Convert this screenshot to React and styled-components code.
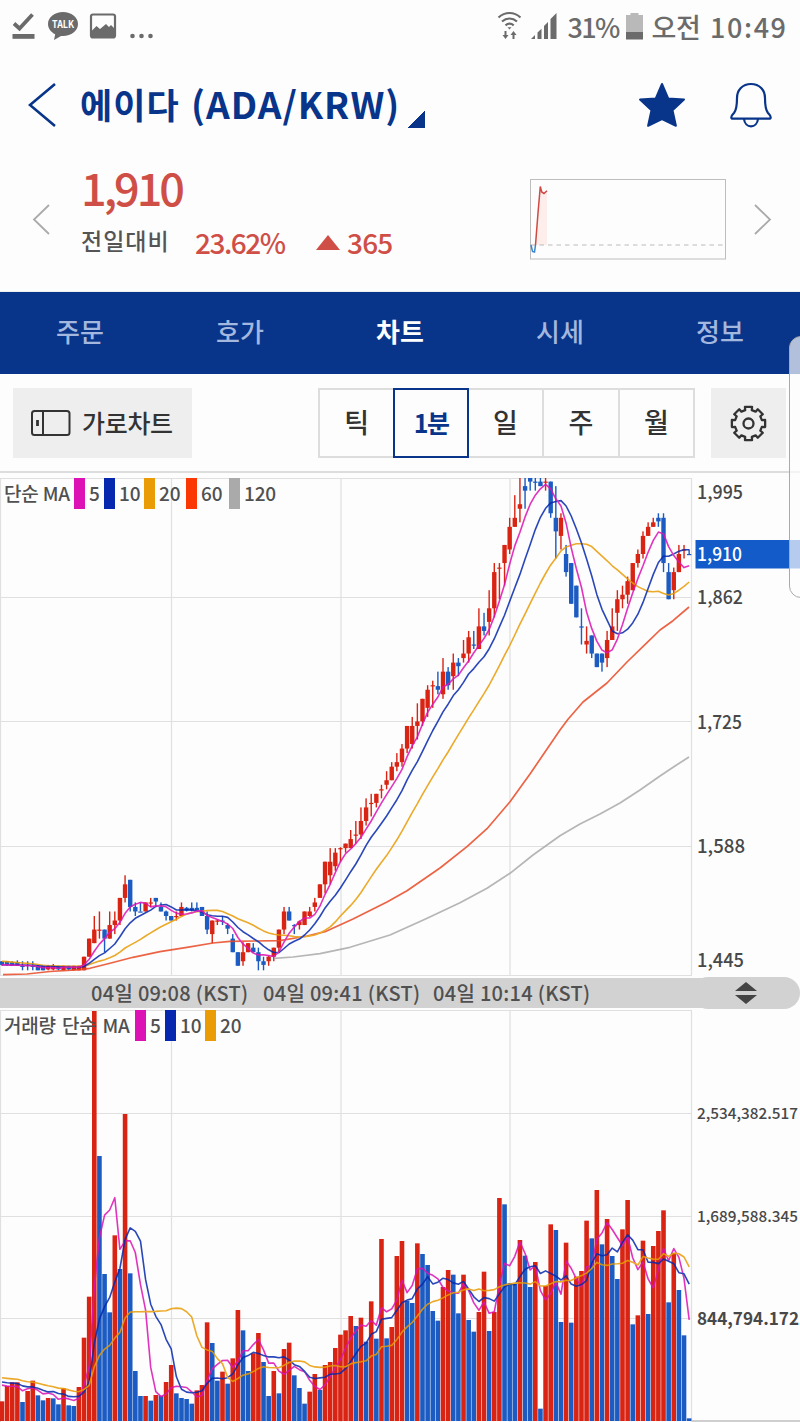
import { Fragment } from 'react'
import styled, { createGlobalStyle } from 'styled-components'

const GlobalStyle = createGlobalStyle`
  * {
    box-sizing: border-box;
  }

  body {
    margin: 0;
    background: #fdfdfd;
    font-family: 'Noto Sans CJK KR', 'Noto Sans', sans-serif;
  }
`

const colours = {
  navy: '#08358a',
  up: '#d92313',
  down: '#1b5bc2',
  ma5: '#dd12b4',
  ma10: '#0628ae',
  ma20: '#e99c05',
  ma60: '#fb3704',
  ma120: '#aaaaaa',
}

const STEP = 5.128
const FIRST_X = 2

const candleX = (i) => FIRST_X + STEP * i
const priceY = (price) => 76 + (1910 - price) * 0.905

// [rising, high, body top, body bottom, low]
const candles = [
  [0, 1460, 1460, 1456, 1455], [0, 1460, 1460, 1456, 1455],
  [0, 1460, 1459, 1455, 1455], [0, 1461, 1459, 1455, 1455],
  [0, 1460, 1455, 1455, 1450], [0, 1460, 1456, 1455, 1450],
  [0, 1460, 1455, 1455, 1450], [0, 1456, 1455, 1450, 1450],
  [0, 1455, 1455, 1450, 1450], [1, 1456, 1455, 1451, 1450],
  [1, 1457, 1455, 1451, 1450], [0, 1455, 1455, 1451, 1450],
  [1, 1455, 1455, 1450, 1450], [0, 1455, 1455, 1451, 1450],
  [1, 1455, 1455, 1450, 1450], [1, 1455, 1455, 1450, 1450],
  [1, 1465, 1465, 1450, 1450], [1, 1485, 1485, 1465, 1465],
  [1, 1510, 1495, 1480, 1480], [1, 1515, 1495, 1495, 1485],
  [0, 1495, 1495, 1485, 1470], [1, 1515, 1500, 1485, 1485],
  [1, 1515, 1505, 1500, 1490], [1, 1530, 1530, 1505, 1500],
  [1, 1555, 1545, 1530, 1525], [0, 1550, 1550, 1520, 1515],
  [0, 1525, 1520, 1515, 1510], [0, 1525, 1515, 1515, 1515],
  [1, 1525, 1525, 1515, 1515], [1, 1530, 1525, 1525, 1520],
  [0, 1530, 1530, 1526, 1520], [0, 1525, 1520, 1515, 1515],
  [0, 1516, 1515, 1510, 1505], [0, 1510, 1510, 1505, 1505],
  [1, 1515, 1510, 1510, 1505], [1, 1525, 1520, 1510, 1510],
  [0, 1520, 1519, 1516, 1515], [0, 1525, 1519, 1516, 1515],
  [0, 1525, 1519, 1516, 1515], [0, 1520, 1520, 1510, 1510],
  [0, 1515, 1510, 1495, 1490], [1, 1505, 1505, 1490, 1480],
  [1, 1506, 1505, 1505, 1500], [0, 1510, 1505, 1505, 1500],
  [0, 1502, 1500, 1496, 1490], [0, 1490, 1485, 1470, 1470],
  [0, 1470, 1470, 1455, 1455], [1, 1481, 1470, 1460, 1455],
  [1, 1480, 1480, 1470, 1470], [0, 1480, 1475, 1470, 1470],
  [0, 1475, 1470, 1460, 1450], [0, 1465, 1460, 1456, 1450],
  [1, 1466, 1465, 1460, 1455], [1, 1475, 1475, 1465, 1460],
  [1, 1495, 1495, 1475, 1470], [1, 1520, 1515, 1495, 1490],
  [0, 1520, 1515, 1505, 1505], [0, 1501, 1500, 1500, 1490],
  [1, 1505, 1504, 1500, 1495], [1, 1515, 1515, 1500, 1500],
  [1, 1520, 1515, 1510, 1509], [1, 1530, 1525, 1520, 1515],
  [1, 1545, 1545, 1530, 1530], [1, 1570, 1570, 1545, 1535],
  [1, 1585, 1570, 1555, 1545], [1, 1585, 1580, 1565, 1560],
  [1, 1586, 1585, 1585, 1570], [1, 1590, 1590, 1585, 1580],
  [1, 1605, 1595, 1585, 1585], [1, 1615, 1600, 1600, 1590],
  [1, 1630, 1615, 1600, 1595], [1, 1640, 1630, 1615, 1610],
  [1, 1645, 1635, 1635, 1620], [1, 1645, 1645, 1635, 1630],
  [1, 1655, 1650, 1650, 1640], [1, 1670, 1660, 1655, 1650],
  [1, 1680, 1675, 1660, 1660], [1, 1690, 1680, 1675, 1670],
  [1, 1700, 1695, 1680, 1675], [1, 1720, 1720, 1695, 1690],
  [1, 1730, 1720, 1700, 1695], [1, 1745, 1725, 1720, 1705],
  [1, 1750, 1750, 1725, 1720], [1, 1765, 1760, 1740, 1730],
  [1, 1770, 1765, 1765, 1740], [0, 1780, 1764, 1760, 1755],
  [1, 1795, 1780, 1755, 1750], [0, 1785, 1780, 1765, 1760],
  [1, 1800, 1790, 1775, 1760], [0, 1795, 1790, 1786, 1775],
  [1, 1815, 1800, 1795, 1790], [1, 1825, 1818, 1800, 1790],
  [0, 1825, 1810, 1810, 1805], [1, 1850, 1830, 1805, 1805],
  [0, 1845, 1830, 1825, 1820], [1, 1870, 1850, 1835, 1820],
  [1, 1900, 1890, 1850, 1840], [1, 1900, 1895, 1895, 1860],
  [1, 1920, 1920, 1900, 1875], [1, 1950, 1940, 1915, 1910],
  [1, 1975, 1950, 1940, 1940], [1, 2000, 1965, 1960, 1945],
  [0, 2000, 1985, 1980, 1960], [0, 2000, 1996, 1990, 1980],
  [0, 2000, 1990, 1990, 1980], [0, 1996, 1990, 1985, 1985],
  [1, 1996, 1990, 1990, 1980], [0, 1990, 1990, 1955, 1950],
  [0, 1985, 1950, 1935, 1905], [1, 1955, 1950, 1930, 1915],
  [0, 1920, 1910, 1890, 1885], [0, 1900, 1900, 1855, 1855],
  [0, 1875, 1875, 1840, 1840], [0, 1850, 1830, 1830, 1810],
  [1, 1830, 1814, 1810, 1800], [0, 1820, 1820, 1800, 1795],
  [0, 1800, 1800, 1785, 1785], [0, 1800, 1800, 1790, 1780],
  [1, 1825, 1815, 1795, 1785], [1, 1850, 1830, 1815, 1815],
  [1, 1870, 1860, 1845, 1825], [1, 1875, 1865, 1860, 1850],
  [1, 1885, 1880, 1865, 1855], [1, 1900, 1900, 1870, 1870],
  [1, 1915, 1910, 1900, 1895], [1, 1935, 1930, 1910, 1905],
  [1, 1945, 1940, 1930, 1930], [1, 1950, 1945, 1940, 1940],
  [0, 1955, 1950, 1946, 1940], [0, 1955, 1950, 1900, 1890],
  [0, 1900, 1890, 1860, 1860], [1, 1895, 1890, 1870, 1860],
  [1, 1920, 1910, 1890, 1890], [1, 1920, 1915, 1915, 1905],
  [0, 1915, 1910, 1910, 1910],
]

const volumes = [
  59, 105, 116, 116, 57, 90, 121, 77, 62, 69, 68, 50, 98, 47, 45, 102, 250,
  373, 1230, 795, 441, 326, 557, 456, 921, 443, 150, 75, 75, 61, 78, 76, 117,
  168, 83, 69, 66, 52, 92, 108, 296, 234, 121, 148, 112, 188, 333, 272, 150,
  203, 264, 177, 75, 150, 83, 216, 235, 137, 99, 52, 88, 141, 93, 168, 177,
  219, 259, 272, 315, 285, 310, 238, 359, 247, 546, 248, 282, 495, 540, 361,
  354, 533, 501, 468, 330, 301, 402, 453, 439, 323, 439, 303, 268, 327, 448,
  270, 327, 669, 650, 413, 411, 543, 496, 402, 477, 37, 405, 590, 573, 297,
  535, 295, 433, 450, 601, 548, 693, 530, 606, 495, 426, 575, 663, 290, 317,
  541, 321, 525, 570, 632, 356, 503, 393, 257, 8,
]

const fill = (n, value) => Array(n).fill(value)
const closes = candles.map(([rising, , top, bottom]) => (rising ? top : bottom))
const priceHistory = [...fill(10, 1465), ...fill(10, 1456), ...closes]
const volumeHistory = [...fill(10, 144), ...fill(5, 128), ...fill(5, 120), ...volumes]

const average = (values, span, toY) =>
  values
    .slice(20)
    .map((_, i) => {
      const slice = values.slice(i + 21 - span, i + 21)
      const mean = slice.reduce((a, b) => a + b, 0) / span
      return `${candleX(i).toFixed(1)},${toY(mean).toFixed(1)}`
    })
    .join(' ')

const volumeY = (v) => 411 - v / 3

const ma60 =
  '3,496.7 27,496 50,493.5 80,491.7 90,490.3 110,485.3 133,479.3 160,473.7 187,469.3 213,465 230,463.3 255,463 280,462.7 307,458 325,453.7 353,441 387,424 407,412.7 440,390 467,368.7 487,350.7 510,323.7 530,296 560,252 568,241.3 583,224 607,205 627,184 647,164.7 660,152 673,142.7 689,129'
const ma120 =
  '274,480.3 293,479 320,475.7 350,469.3 390,457 425,441.3 460,424.7 487,410.3 510,395.3 533,377 560,357.7 580,346 600,336 620,325 640,312 660,298 675,288 689,279'

const tabs = [
  { label: '주문' },
  { label: '호가' },
  { label: '차트', active: true },
  { label: '시세' },
  { label: '정보' },
]

const periods = ['틱', '1분', '일', '주', '월']

const priceTicks = [
  { y: 14, label: '1,995', width: 46 },
  { y: 119, label: '1,862', width: 46 },
  { y: 243.5, label: '1,725', width: 45 },
  { y: 368, label: '1,588', width: 48 },
  { y: 482, label: '1,445', width: 47 },
]

const volumeTicks = [
  { y: 103, label: '2,534,382.517', width: 101, size: 15.3 },
  { y: 206, label: '1,689,588.345', width: 101, size: 15.3 },
  { y: 308.5, label: '844,794.172', width: 102, size: 17.5, bold: true },
]

const verticals = [171.5, 341, 510]

function TickLabel({ tick }) {
  const size = tick.size || 19
  return (
    <text
      x="697"
      y={tick.y + size * 0.37}
      fontSize={size}
      fontWeight={tick.bold ? 700 : 500}
      textLength={tick.width}
      lengthAdjust="spacingAndGlyphs"
      fill="#484848"
    >
      {tick.label}
    </text>
  )
}

function Grid({ height, lines }) {
  return (
    <g stroke="#e0e0e0" strokeWidth="1.2">
      <path d={`M0 .5H692M.5 0V${height}M691.5 0V${height}`} />
      {verticals.map((x) => (
        <path key={x} d={`M${x} 0V${height}`} />
      ))}
      {lines.map((y) => (
        <path key={y} d={`M0 ${y}H692`} />
      ))}
    </g>
  )
}

function PriceChart() {
  return (
    <Chart width="800" height="499" viewBox="0 0 800 499">
      <Grid height={497} lines={[119.5, 243.5, 368.5, 497.5]} />
      {candles.map(([rising, high, top, bottom, low], i) => {
        const x = candleX(i)
        const bodyY = priceY(top)
        const height = Math.max(priceY(bottom) - bodyY, 1.2)
        return (
          <g key={i} fill={rising ? colours.up : colours.down}>
            <rect x={x - 0.7} y={priceY(high)} width="1.4" height={priceY(low) - priceY(high)} />
            <rect x={x - 2.2} y={bodyY} width="4.4" height={height} />
          </g>
        )
      })}
      <g fill="none" strokeWidth="1.6" strokeLinejoin="round" opacity="0.85">
        <polyline points={ma120} stroke={colours.ma120} strokeWidth="1.7" />
        <polyline points={ma60} stroke="#ea4a25" strokeWidth="1.7" />
        <polyline points={average(priceHistory, 20, priceY)} stroke={colours.ma20} />
        <polyline points={average(priceHistory, 10, priceY)} stroke={colours.ma10} />
        <polyline points={average(priceHistory, 5, priceY)} stroke={colours.ma5} />
      </g>
      {priceTicks.map((tick) => (
        <TickLabel key={tick.label} tick={tick} />
      ))}
      <rect x="695.5" y="62" width="104.5" height="28.5" fill="#125bc9" />
      <text x="697" y="83" fontSize="19" fontWeight="500" textLength="45" lengthAdjust="spacingAndGlyphs" fill="#fff">
        1,910
      </text>
    </Chart>
  )
}

function VolumeChart() {
  return (
    <Chart width="800" height="412" viewBox="0 0 800 412">
      <Grid height={412} lines={[103.5, 206.5, 308.5]} />
      <path d="M692 411H800" stroke="#cfcfcf" strokeWidth="2" />
      {volumes.map((v, i) => (
        <rect
          key={i}
          x={candleX(i) - 2.3}
          y={volumeY(v)}
          width="4.6"
          height={v / 3}
          fill={i === 0 || v >= volumes[i - 1] ? colours.up : colours.down}
        />
      ))}
      <g fill="none" strokeWidth="1.6" strokeLinejoin="round" opacity="0.85">
        <polyline points={average(volumeHistory, 5, volumeY)} stroke={colours.ma5} />
        <polyline points={average(volumeHistory, 10, volumeY)} stroke={colours.ma10} />
        <polyline points={average(volumeHistory, 20, volumeY)} stroke={colours.ma20} />
      </g>
      {volumeTicks.map((tick) => (
        <TickLabel key={tick.label} tick={tick} />
      ))}
    </Chart>
  )
}

function StatusIcons() {
  return (
    <svg width="160" height="52" viewBox="0 0 160 52" fill="#6b6b6b">
      <path d="M14 23.5l5.500 5L32.500 14.500" fill="none" stroke="#6b6b6b" strokeWidth="3.800" />
      <rect x="12.500" y="34" width="22" height="4.800" />
      <path d="M63 12c8.300 0 15 5.400 15 12s-6.700 12-15 12l-2-.1-7 4 1.200-5.600C50.800 32 48 28.400 48 24c0-6.600 6.700-12 15-12z" />
      <text x="52" y="28.300" fontSize="10.500" fontWeight="700" textLength="22" lengthAdjust="spacingAndGlyphs" fill="#fff">
        TALK
      </text>
      <rect x="91" y="14.500" width="24" height="23" rx="2" fill="none" stroke="#6b6b6b" strokeWidth="2.200" />
      <path d="M91 31.500l5.500-5.500 3.500 3 6-5 3 3 2-2 4 4v9H91z" />
      <circle cx="132.500" cy="36" r="2.300" />
      <circle cx="141.500" cy="36" r="2.300" />
      <circle cx="150.500" cy="36" r="2.300" />
    </svg>
  )
}

function SignalIcons() {
  return (
    <svg width="62" height="52" viewBox="496 0 62 52" fill="#6b6b6b">
      <g fill="none" stroke="#6b6b6b" strokeWidth="2.200">
        <path d="M497.500 17.500c6.500-6 15.500-6 22 0" />
        <path d="M501 21.500c4.500-4 10.500-4 15 0" />
        <path d="M504.500 25.300c2.600-2.200 5.600-2.200 8.200 0" />
      </g>
      <path d="M506.500 27.200h4l-2 2.300z" />
      <path d="M503.500 31h2v4h2l-3 4-3-4h2zM511.500 39h2v-4h2l-3-4-3 4h2z" />
      <path d="M530 39l4-4v4zM536.500 39v-6.500l4-3.800V39zM543 39V26l4-4v17zM549.500 39V19l6-6v26z" />
    </svg>
  )
}

function BatteryIcon() {
  return (
    <svg width="17" height="27" viewBox="0 0 17 27">
      <path d="M4.500 0h8v2H17v17H0V2h4.500z" fill="#b9b9b9" />
      <rect y="19" width="17" height="7.500" fill="#6b6b6b" />
    </svg>
  )
}

function Chevron({ width, height, colour, stroke, flip }) {
  return (
    <svg width={width} height={height} viewBox={`0 0 ${width} ${height}`}>
      <path
        d={
          flip
            ? `M1 1L${width - 2} ${height / 2}L1 ${height - 1}`
            : `M${width - 1} 1L2 ${height / 2}L${width - 1} ${height - 1}`
        }
        fill="none"
        stroke={colour}
        strokeWidth={stroke}
      />
    </svg>
  )
}

function StarIcon() {
  return (
    <svg width="48" height="46" viewBox="0 0 48 46">
      <path
        d="M24 2l6.200 14.400 15.800 1.200-11.500 10.600 3.400 15.600L24 37.200l-13.900 6.600 3.400-15.600L2 17.600l15.800-1.200z"
        fill={colours.navy}
        stroke={colours.navy}
        strokeWidth="2"
        strokeLinejoin="round"
      />
    </svg>
  )
}

function BellIcon() {
  return (
    <svg width="42" height="46" viewBox="0 0 42 46" fill="none" stroke={colours.navy} strokeWidth="2.200">
      <path
        d="M21 2C12.500 2 7 8 7 16c0 9-.6 12-3 15-1.300 1.500-2.700 2.700-2.700 4.200 0 1 .7 1.500 1.700 1.500h36c1 0 1.700-.5 1.700-1.500 0-1.500-1.400-2.700-2.700-4.200-2.400-3-3-6-3-15 0-8-5.500-14-14-14z"
        strokeLinejoin="round"
      />
      <path d="M14 37c.5 4.500 3.400 7.300 7 7.300s6.500-2.800 7-7.300" />
    </svg>
  )
}

function Sparkline() {
  return (
    <svg width="196" height="81" viewBox="0 0 196 81" fill="none">
      <rect x=".5" y=".5" width="195" height="79.500" stroke="#bdbdbd" />
      <path d="M5 66L10 8l3 5 4-1v54z" fill="#fdeeec" />
      <path d="M1 66H195" stroke="#bbb" strokeDasharray="4.500 4" />
      <path d="M1 66l1.500 6.500 2 .5 1-7" stroke="#3a87cf" strokeWidth="1.500" />
      <path d="M5.500 66L8 34 10.300 7.500l1.400 5.500 2.300 1.500 3-2.700" stroke="#cf4a43" strokeWidth="1.500" />
    </svg>
  )
}

function LandscapeIcon() {
  return (
    <svg width="40" height="26" viewBox="0 0 40 26" fill="none" stroke="#333" strokeWidth="2">
      <rect x="1" y="1" width="37.500" height="24" rx="2.500" />
      <path d="M12 1v24" />
      <path d="M6.500 10v6" strokeWidth="2.800" />
    </svg>
  )
}

function GearIcon() {
  const teeth = [0, 45, 90, 135, 180, 225, 270, 315]
  const point = (r, angle) => {
    const a = (angle * Math.PI) / 180
    return `${(18.5 + r * Math.sin(a)).toFixed(2)} ${(18.5 - r * Math.cos(a)).toFixed(2)}`
  }
  const outline = teeth
    .map((t) => [point(13.8, t - 14), point(17, t - 12), point(17, t + 12), point(13.8, t + 14)].join('L'))
    .join('L')
  return (
    <svg width="37" height="37" viewBox="0 0 37 37" fill="none" stroke="#333" strokeWidth="2.300">
      <path d={`M${outline}Z`} strokeLinejoin="round" />
      <circle cx="18.500" cy="18.500" r="5" />
    </svg>
  )
}

function MaLegend({ title, entries }) {
  return (
    <Legend>
      {title}
      {entries.map(([span, colour, width]) => (
        <Fragment key={span}>
          <Swatch $colour={colour} />
          <Span $width={width}>{span}</Span>
        </Fragment>
      ))}
    </Legend>
  )
}

export default function App() {
  return (
    <Screen>
      <GlobalStyle />
      <StatusBar>
        <StatusIcons />
        <StatusRight>
          <SignalIcons />
          <StatusText $width={50} $spacing={-1.6}>31%</StatusText>
          <BatteryIcon />
          <StatusText $width={50} $spacing={-0.4}>오전</StatusText>
          <StatusText $width={79} $spacing={1.6}>10:49</StatusText>
        </StatusRight>
      </StatusBar>

      <Header>
        <Chevron width={28} height={44} colour={colours.navy} stroke={2.6} />
        <Title>
          <Korean>에이다</Korean>(ADA/KRW)
        </Title>
        <Corner />
        <Actions>
          <StarIcon />
          <BellIcon />
        </Actions>
      </Header>

      <Summary>
        <Chevron width={18} height={31} colour="#aaa" stroke={1.8} />
        <Quote>
          <Price>1,910</Price>
          <Change>
            <ChangeLabel>전일대비</ChangeLabel>
            <Percent>23.62%</Percent>
            <Triangle />
            <Difference>365</Difference>
          </Change>
        </Quote>
        <Sparkline />
        <Chevron width={18} height={31} colour="#aaa" stroke={1.8} flip />
      </Summary>

      <Tabs>
        {tabs.map(({ label, active }) => (
          <Tab key={label} $active={active}>
            {label}
          </Tab>
        ))}
      </Tabs>

      <Toolbar>
        <Landscape>
          <LandscapeIcon />
          <span>가로차트</span>
        </Landscape>
        <Periods>
          {periods.map((period) => (
            <Period key={period} $active={period === '1분'}>
              {period}
            </Period>
          ))}
        </Periods>
        <Settings>
          <GearIcon />
        </Settings>
      </Toolbar>

      <ChartPanel $height={499}>
        <PriceChart />
        <MaLegend
          title={<LegendTitle $width={70}>단순 MA</LegendTitle>}
          entries={[
            [5, colours.ma5, 19],
            [10, colours.ma10, 29],
            [20, colours.ma20, 31],
            [60, colours.ma60, 32],
            [120, colours.ma120, 40],
          ]}
        />
      </ChartPanel>

      <TimeStrip>
        <Time $width={172}>04일 09:08 (KST)</Time>
        <Time $width={170}>04일 09:41 (KST)</Time>
        <Time $width={170}>04일 10:14 (KST)</Time>
        <Resize>
          <svg width="24" height="24" viewBox="0 0 24 24" fill="#444">
            <path d="M1 10L12 1l11 9zM1 14h22l-11 9z" />
          </svg>
        </Resize>
      </TimeStrip>

      <ChartPanel $height={412}>
        <VolumeChart />
        <MaLegend
          title={
            <LegendTitle $width={131} $wordSpacing={2}>
              거래량 단순 MA
            </LegendTitle>
          }
          entries={[
            [5, colours.ma5, 19],
            [10, colours.ma10, 29],
            [20, colours.ma20, 31],
          ]}
        />
      </ChartPanel>

      <EdgeHandle />
    </Screen>
  )
}

const Screen = styled.div`
  position: relative;
  width: 800px;
  height: 1422px;
  overflow: hidden;
  white-space: nowrap;
`

const StatusBar = styled.div`
  display: flex;
  justify-content: space-between;
  height: 52px;
`

const StatusRight = styled.div`
  display: flex;
  align-items: center;
  gap: 8.5px;
  padding-right: 11px;
`

const StatusText = styled.span`
  width: ${({ $width }) => $width}px;
  font-size: 27px;
  font-weight: 500;
  letter-spacing: ${({ $spacing }) => $spacing}px;
  color: #6b6b6b;
`

const Header = styled.header`
  display: flex;
  align-items: center;
  height: 106px;
  padding: 0 28px;
`

const Title = styled.h1`
  display: flex;
  align-items: center;
  width: 328px;
  height: 60px;
  margin: 0 0 4px 24px;
  font-size: 37px;
  font-weight: 700;
  letter-spacing: 1px;
  color: ${colours.navy};
`

const Korean = styled.span`
  width: 111px;
  font-size: 35px;
`

const Corner = styled.i`
  align-self: flex-end;
  width: 17px;
  height: 17px;
  margin-bottom: 30px;
  background: linear-gradient(135deg, transparent 50%, ${colours.navy} 50%);
`

const Actions = styled.div`
  display: flex;
  gap: 44px;
  margin-left: auto;
`

const Summary = styled.section`
  display: flex;
  align-items: center;
  height: 134px;
  padding: 0 28px 11px 32px;
  border-bottom: 1px solid #eee;

  > svg:last-child {
    margin-left: 28px;
  }
`

const Quote = styled.div`
  width: 448px;
  margin-right: auto;
  padding: 0 0 11px 31px;
`

const Price = styled.div`
  font-size: 45px;
  font-weight: 500;
  line-height: 56px;
  letter-spacing: -3px;
  color: #cf4f47;
`

const Change = styled.div`
  display: flex;
  align-items: center;
  height: 54px;
  font-size: 28px;
  font-weight: 500;
  letter-spacing: -1.500px;
  color: #cf4f47;
`

const ChangeLabel = styled.span`
  width: 114px;
  padding-bottom: 3px;
  font-size: 23px;
  letter-spacing: 1px;
  color: #555;
`

const Percent = styled.span`
  width: 121px;
`

const Triangle = styled.i`
  width: 24px;
  height: 15px;
  margin: 2px 7px 0 0;
  clip-path: polygon(50% 0, 100% 100%, 0 100%);
  background: #cf4f47;
`

const Difference = styled.span`
  letter-spacing: -0.8px;
`

const Tabs = styled.nav`
  display: grid;
  grid-template-columns: repeat(5, 1fr);
  height: 82px;
  background: ${colours.navy};
`

const Tab = styled.a`
  display: flex;
  align-items: center;
  justify-content: center;
  padding-bottom: 5px;
  font-size: 26px;
  font-weight: ${({ $active }) => ($active ? 700 : 500)};
  color: ${({ $active }) => ($active ? '#fff' : '#a4b7de')};
`

const Toolbar = styled.div`
  display: flex;
  height: 99px;
  padding: 14px 14px 13px 13px;
  border-bottom: 2px solid #ddd;
  margin-bottom: 5px;
`

const Landscape = styled.button`
  display: flex;
  align-items: center;
  gap: 11px;
  width: 179px;
  padding: 0 0 0 18px;
  border: 0;
  background: #eee;
  font: 500 25px 'Noto Sans CJK KR', sans-serif;
  letter-spacing: -0.3px;
  color: #333;

  span {
    padding-bottom: 3px;
  }
`

const Periods = styled.div`
  display: grid;
  grid-template-columns: repeat(5, 1fr);
  width: 377px;
  margin-left: auto;
`

const Period = styled.button`
  padding: 0 0 3px;
  border: 2px solid ${({ $active }) => ($active ? colours.navy : '#ddd')};
  border-left-width: ${({ $active }) => ($active ? '2px' : '0')};
  background: #fdfdfd;
  font: ${({ $active }) => ($active ? '700 25px' : '500 27px')} 'Noto Sans CJK KR', sans-serif;
  letter-spacing: ${({ $active }) => ($active ? '-1.5px' : '0')};
  color: ${({ $active }) => ($active ? colours.navy : '#333')};

  &:first-child {
    border-width: 2px 0 2px 2px;
  }
`

const Settings = styled.button`
  display: grid;
  place-items: center;
  width: 75px;
  margin-left: 16px;
  padding: 0;
  border: 0;
  background: #eee;
`

const ChartPanel = styled.section`
  display: grid;
  height: ${({ $height }) => $height}px;

  > * {
    grid-area: 1 / 1;
  }
`

const Chart = styled.svg`
  display: block;
`

const Legend = styled.div`
  display: flex;
  align-items: center;
  align-self: start;
  height: 31px;
  padding-left: 4px;
  font-size: 19px;
  font-weight: 500;
  letter-spacing: -0.2px;
  line-height: 27px;
  color: #505050;
`

const LegendTitle = styled.span`
  width: ${({ $width }) => $width}px;
  padding-bottom: 3px;
  word-spacing: ${({ $wordSpacing = 0 }) => $wordSpacing}px;
`

const Span = styled.span`
  width: ${({ $width }) => $width}px;
  padding: 0 0 3px 4px;
`

const Swatch = styled.i`
  width: 11px;
  height: 31px;
  background: ${({ $colour }) => $colour};
`

const TimeStrip = styled.div`
  display: flex;
  align-items: center;
  height: 33px;
  padding: 0 0 2px 91px;
  background: linear-gradient(#d2d2d2, #d2d2d2) 0 1px / 706px 30px no-repeat;
`

const Time = styled.span`
  width: ${({ $width }) => $width}px;
  font-size: 20px;
  font-weight: 500;
  letter-spacing: 0.3px;
  color: #505050;
`

const Resize = styled.div`
  display: grid;
  place-items: center;
  width: 108px;
  height: 32px;
  margin-left: auto;
  border-radius: 16px;
  background: #d2d2d2;
`

const EdgeHandle = styled.div`
  position: absolute;
  top: 336px;
  left: 789px;
  width: 30px;
  height: 262px;
  border: 1.5px solid #aaa;
  border-radius: 12px;
  background: rgba(252, 252, 253, 0.7);
`
